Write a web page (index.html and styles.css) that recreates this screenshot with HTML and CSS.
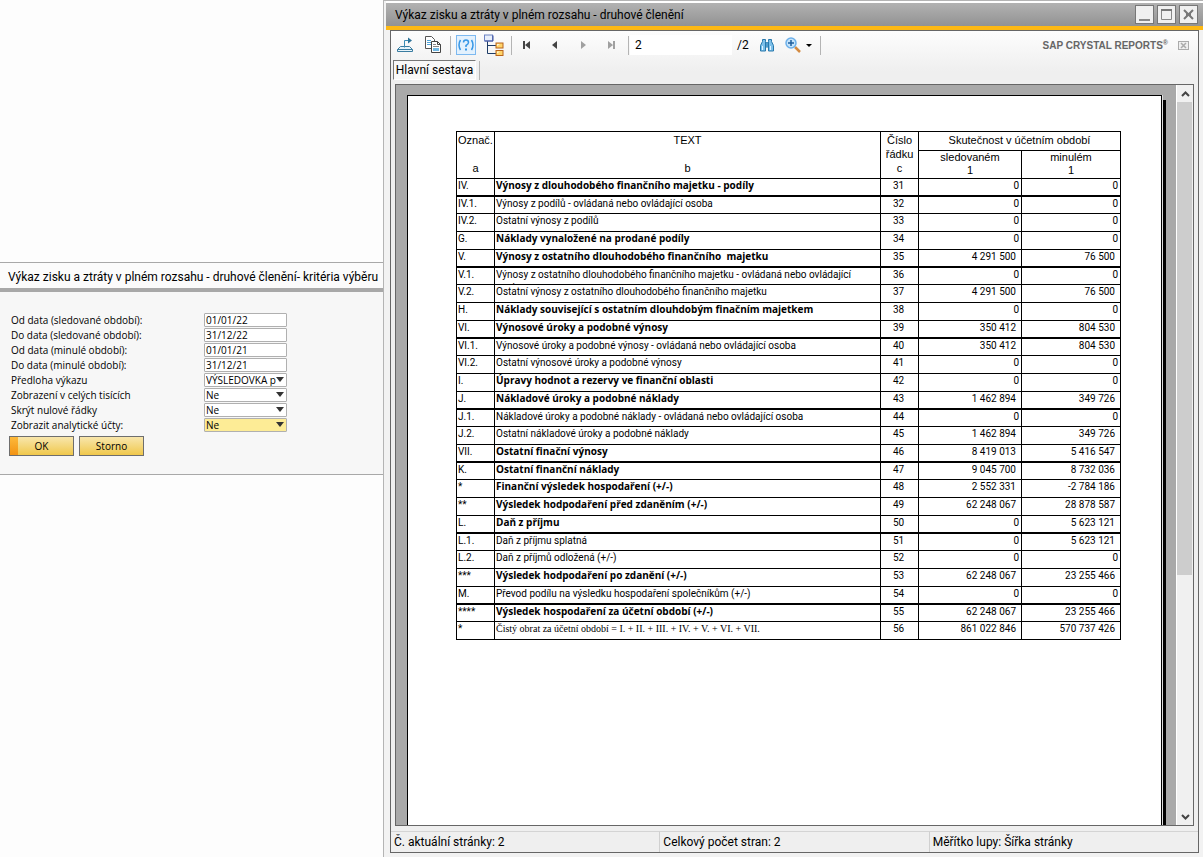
FILE: index.html
```html
<!DOCTYPE html>
<html lang="cs">
<head>
  <meta charset="UTF-8">
  <title>Výkaz zisku a ztráty</title>
  <link rel="stylesheet" href="styles.css">
</head>
<body>
  <!-- Selection criteria -->
  <aside class="side">
    <form class="criteria">
      <h2 class="criteria-title">Výkaz zisku a ztráty v plném rozsahu - druhové členění- kritéria výběru</h2>
      <div class="criteria-body">
        <div class="field"><label for="dateFrom">Od data (sledované období):</label><input type="text" id="dateFrom" value="01/01/22"></div>
        <div class="field"><label for="dateTo">Do data (sledované období):</label><input type="text" id="dateTo" value="31/12/22"></div>
        <div class="field"><label for="prevFrom">Od data (minulé období):</label><input type="text" id="prevFrom" value="01/01/21"></div>
        <div class="field"><label for="prevTo">Do data (minulé období):</label><input type="text" id="prevTo" value="31/12/21"></div>
        <div class="field"><label for="template">Předloha výkazu</label><select id="template"><option>VÝSLEDOVKA p</option></select></div>
        <div class="field"><label for="thousands">Zobrazení v celých tisících</label><select id="thousands"><option>Ne</option></select></div>
        <div class="field"><label for="hideZero">Skrýt nulové řádky</label><select id="hideZero"><option>Ne</option></select></div>
        <div class="field"><label for="analytic">Zobrazit analytické účty:</label><select id="analytic" class="active"><option>Ne</option></select></div>
        <div class="buttons">
          <button type="button" class="btn btn-ok">OK</button>
          <button type="button" class="btn">Storno</button>
        </div>
      </div>
    </form>
  </aside>

  <!-- Report window -->
  <main class="window">
    <header class="titlebar">
      <h1 class="title">Výkaz zisku a ztráty v plném rozsahu - druhové členění</h1>
      <button type="button" class="win-btn" aria-label="Minimalizovat"><svg width="17" height="17" viewBox="0 0 17 17"><path d="M3 14h11" stroke="#888" stroke-width="2"/></svg></button>
      <button type="button" class="win-btn" aria-label="Maximalizovat"><svg width="17" height="17" viewBox="0 0 17 17"><path d="M3.500 4v9.500h10V4" fill="none" stroke="#888"/><path d="M3 4h11" stroke="#777" stroke-width="2"/></svg></button>
      <button type="button" class="win-btn" aria-label="Zavřít"><svg width="17" height="17" viewBox="0 0 17 17"><path d="M4 4l9 9M13 4l-9 9" stroke="#777" stroke-width="2"/><path d="M6 8.500h5" stroke="#777" stroke-width="3"/></svg></button>
    </header>

    <div class="viewer">
      <div class="toolbar">
        <button type="button" class="tool" aria-label="Export">
          <svg width="18" height="18" viewBox="0 0 18 18"><path d="M4.500 10.500h9l3 3v2h-15v-2z" fill="#e8f4fa" stroke="#3a7ca0"/><path d="M1.500 13.500h15" stroke="#3a7ca0"/><path d="M8.500 11.500V4.500h4" fill="none" stroke="#3a8cb5"/><path d="M12 1.500l4 3-4 3z" fill="#2d7399"/></svg>
        </button>
        <button type="button" class="tool" aria-label="Kopírovat">
          <svg width="18" height="18" viewBox="0 0 18 18"><path d="M1.500.5h6l3 3v9h-9z" fill="#fff" stroke="#555"/><path d="M3 4.500h4M3 6.500h6M3 8.500h5" stroke="#4fa3d8"/><path d="M7.500 5.500h6l3 3v8h-9z" fill="#fff" stroke="#444"/><path d="M13.500 5.500v3h3" fill="none" stroke="#444"/><path d="M9 8.500h3M9 10.500h6" stroke="#888"/><path d="M9 12h6v3H9z" fill="#72b9e4"/></svg>
        </button>
        <span class="sep"></span>
        <button type="button" class="tool" aria-label="Parametry">
          <svg width="20" height="20" viewBox="0 0 20 20"><rect x=".5" y=".5" width="19" height="19" fill="#e3f1fd" stroke="#7db9f0"/><path d="M4.500 5q-3 5 0 10M15.500 5q3 5 0 10M7.500 7.500q0-2.500 2.500-2.500t2.500 2.500q0 1.500-2.500 3V12" fill="none" stroke="#3797e6" stroke-width="1.500"/><path d="M9 13.500h2v2H9z" fill="#3797e6"/></svg>
        </button>
        <button type="button" class="tool" aria-label="Strom skupin">
          <svg width="20" height="22" viewBox="0 0 20 22"><path d="M3.500 7v12.500H12M3.500 11.500H12" fill="none" stroke="#1d3c66"/><rect x=".5" y="1" width="8" height="6" fill="#e8effb" stroke="#6d83c4"/><path d="M1 7h8V1.500" fill="none" stroke="#3c4f9c"/><rect x="12" y="9" width="7" height="5" fill="#ffd469" stroke="#b8641c"/><path d="M13 10h3l-3 2z" fill="#fff6d8"/><rect x="12" y="16.500" width="7" height="5" fill="#ffd469" stroke="#b8641c"/><path d="M13 17.500h3l-3 2z" fill="#fff6d8"/></svg>
        </button>
        <span class="sep"></span>
        <button type="button" class="tool" aria-label="První stránka"><svg width="8" height="8" viewBox="0 0 8 8" fill="#444"><path d="M0 0h2v8H0zM7 0v8L2 4z"/></svg></button>
        <button type="button" class="tool" aria-label="Předchozí stránka"><svg width="8" height="8" viewBox="0 0 8 8" fill="#444"><path d="M6 0v8L1 4z"/></svg></button>
        <button type="button" class="tool" aria-label="Další stránka"><svg width="8" height="8" viewBox="0 0 8 8" fill="#a0a0a0"><path d="M2 0v8l5-4z"/></svg></button>
        <button type="button" class="tool" aria-label="Poslední stránka"><svg width="8" height="8" viewBox="0 0 8 8" fill="#a0a0a0"><path d="M6 0h2v8H6zM1 0v8l5-4z"/></svg></button>
        <span class="sep"></span>
        <input type="text" class="page-input" aria-label="Stránka" value="2">
        <span class="page-total">/2</span>
        <button type="button" class="tool" aria-label="Hledat">
          <svg width="16" height="14" viewBox="0 0 16 14"><path d="M3.500 3.500V1.500h3v2l1 1h1l1-1v-2h3v2l2 4v5.500H9.500V9h-3v4h-5V7.500z" fill="#7cbfe9" stroke="#2878ac"/><path d="M6.500 4v5M9.500 4v5M8 5v3" stroke="#2878ac"/><path d="M3.500 8v4M11.500 8v4" stroke="#e2f4ff"/></svg>
        </button>
        <button type="button" class="tool tool-wide" aria-label="Lupa">
          <svg width="28" height="16" viewBox="0 0 28 16"><path d="M10 10l5 5" stroke="#d48b42" stroke-width="2.500"/><circle cx="6" cy="6" r="5" fill="#c6e4fb" stroke="#6cb0ea" stroke-width="1.500"/><path d="M3 6h6M6 3v6" stroke="#1f5f9f" stroke-width="1.500"/><path d="M21 7h6l-3 3z" fill="#000"/></svg>
        </button>
        <span class="sep"></span>
        <span class="brand">SAP CRYSTAL REPORTS<sup>®</sup></span>
        <button type="button" class="brand-close" aria-label="Zavřít zobrazení"><svg width="11" height="9" viewBox="0 0 11 9"><rect x=".5" y=".5" width="10" height="8" fill="#eee" stroke="#aaa"/><path d="M3 2l5 5M8 2L3 7" stroke="#aaa" stroke-width="1.500"/></svg></button>
      </div>

      <div class="tabs">
        <button type="button" class="tab">Hlavní sestava</button>
        <span class="sep"></span>
      </div>

      <div class="canvas">
        <div class="paper">
          <table class="report">
            <colgroup><col class="col-code"><col><col class="col-row"><col class="col-current"><col class="col-previous"></colgroup>
            <thead>
              <tr class="head-top">
                <th rowspan="2">Označ.<br><br>a</th>
                <th rowspan="2">TEXT<br><br>b</th>
                <th rowspan="2">Číslo<br>řádku<br>c</th>
                <th colspan="2">Skutečnost v účetním období</th>
              </tr>
              <tr class="head-sub"><th>sledovaném<br>1</th><th>minulém<br>1</th></tr>
            </thead>
            <tbody>
              <tr class="sum thick"><td>IV.</td><td>Výnosy z dlouhodobého finančního majetku - podíly</td><td>31</td><td>0</td><td>0</td></tr>
              <tr><td>IV.1.</td><td>Výnosy z podílů - ovládaná nebo ovládající osoba</td><td>32</td><td>0</td><td>0</td></tr>
              <tr><td>IV.2.</td><td>Ostatní výnosy z podílů</td><td>33</td><td>0</td><td>0</td></tr>
              <tr class="sum"><td>G.</td><td>Náklady vynaložené na prodané podíly</td><td>34</td><td>0</td><td>0</td></tr>
              <tr class="sum thick"><td>V.</td><td>Výnosy z ostatního dlouhodobého finančního&nbsp; majetku</td><td>35</td><td class="amount">4 291 500</td><td class="amount">76 500</td></tr>
              <tr><td>V.1.</td><td><div class="clip">Výnosy z ostatního dlouhodobého finančního majetku - ovládaná nebo ovládající<br>osoba</div></td><td>36</td><td>0</td><td>0</td></tr>
              <tr><td>V.2.</td><td>Ostatní výnosy z ostatního dlouhodobého finančního majetku</td><td>37</td><td class="amount">4 291 500</td><td class="amount">76 500</td></tr>
              <tr class="sum"><td>H.</td><td>Náklady související s ostatním dlouhdobým finačním majetkem</td><td>38</td><td>0</td><td>0</td></tr>
              <tr class="sum thick"><td>VI.</td><td>Výnosové úroky a podobné výnosy</td><td>39</td><td class="amount">350 412</td><td class="amount">804 530</td></tr>
              <tr><td>VI.1.</td><td>Výnosové úroky a podobné výnosy - ovládaná nebo ovládající osoba</td><td>40</td><td class="amount">350 412</td><td class="amount">804 530</td></tr>
              <tr><td>VI.2.</td><td>Ostatní výnosové úroky a podobné výnosy</td><td>41</td><td>0</td><td>0</td></tr>
              <tr class="sum"><td>I.</td><td>Úpravy hodnot a rezervy ve finanční oblasti</td><td>42</td><td>0</td><td>0</td></tr>
              <tr class="sum thick"><td>J.</td><td>Nákladové úroky a podobné náklady</td><td>43</td><td class="amount">1 462 894</td><td class="amount">349 726</td></tr>
              <tr><td>J.1.</td><td>Nákladové úroky a podobné náklady - ovládaná nebo ovládající osoba</td><td>44</td><td>0</td><td>0</td></tr>
              <tr><td>J.2.</td><td>Ostatní nákladové úroky a podobné náklady</td><td>45</td><td class="amount">1 462 894</td><td class="amount">349 726</td></tr>
              <tr class="sum thick"><td>VII.</td><td>Ostatní finační výnosy</td><td>46</td><td class="amount">8 419 013</td><td class="amount">5 416 547</td></tr>
              <tr class="sum"><td>K.</td><td>Ostatní finanční náklady</td><td>47</td><td class="amount">9 045 700</td><td class="amount">8 732 036</td></tr>
              <tr class="sum"><td>*</td><td>Finanční výsledek hospodaření (+/-)</td><td>48</td><td class="amount">2 552 331</td><td class="amount">-2 784 186</td></tr>
              <tr class="sum"><td>**</td><td>Výsledek hodpodaření před zdaněním (+/-)</td><td>49</td><td class="amount">62 248 067</td><td class="amount">28 878 587</td></tr>
              <tr class="sum thick"><td>L.</td><td>Daň z příjmu</td><td>50</td><td>0</td><td class="amount">5 623 121</td></tr>
              <tr><td>L.1.</td><td>Daň z příjmu splatná</td><td>51</td><td>0</td><td class="amount">5 623 121</td></tr>
              <tr><td>L.2.</td><td>Daň z příjmů odložená (+/-)</td><td>52</td><td>0</td><td>0</td></tr>
              <tr class="sum"><td>***</td><td>Výsledek hodpodaření po zdanění (+/-)</td><td>53</td><td class="amount">62 248 067</td><td class="amount">23 255 466</td></tr>
              <tr class="thick"><td>M.</td><td>Převod podílu na výsledku hospodaření společníkům (+/-)</td><td>54</td><td>0</td><td>0</td></tr>
              <tr class="sum"><td>****</td><td>Výsledek hospodaření za účetní období (+/-)</td><td>55</td><td class="amount">62 248 067</td><td class="amount">23 255 466</td></tr>
              <tr class="turnover"><td>*</td><td>Čistý obrat za účetní období = I. + II. + III. + IV. + V. + VI. + VII.</td><td>56</td><td class="amount">861 022 846</td><td class="amount">570 737 426</td></tr>
            </tbody>
          </table>
        </div>
        <div class="scrollbar">
          <button type="button" class="scroll-btn" aria-label="Nahoru"><svg width="9" height="6" viewBox="0 0 9 6"><path d="M1 5l3.500-3.500L8 5" fill="none" stroke="#444" stroke-width="2"/></svg></button>
          <div class="scroll-track"><div class="scroll-thumb"></div></div>
          <button type="button" class="scroll-btn" aria-label="Dolů"><svg width="9" height="6" viewBox="0 0 9 6"><path d="M1 1l3.500 3.500L8 1" fill="none" stroke="#444" stroke-width="2"/></svg></button>
        </div>
      </div>

      <footer class="status">
        <span>Č. aktuální stránky: 2</span>
        <span>Celkový počet stran: 2</span>
        <span>Měřítko lupy: Šířka stránky</span>
      </footer>
    </div>
  </main>
</body>
</html>
```
FILE: styles.css
```css
* {
  box-sizing: border-box;
}
body {
  margin: 0;
  min-height: 100vh;
  display: grid;
  grid-template-columns: 384px 1fr;
  background: #fdfdfd;
  color: #000;
  font-family: Roboto, "Noto Sans", sans-serif;
  font-size: 12px;
}
h1, h2 {
  margin: 0;
  font-size: 12px;
  font-weight: normal;
}
button {
  padding: 0;
  border: 0;
  background: none;
  color: inherit;
  font: inherit;
}
svg {
  display: block;
}

/* Selection criteria */
.side {
  padding-top: 262px;
  border-right: 1px solid #b4b4b4;
}
.criteria {
  border-top: 1px solid #a8a8a8;
  border-bottom: 1px solid #a8a8a8;
  background: #f7f7f7;
}
.criteria-title {
  padding: 4px 0 0 8px;
  height: 29px;
  border-bottom: 4px solid #a8a8a8;
  background: #fbfbfb;
  line-height: 21px;
  white-space: nowrap;
}
.criteria-body {
  padding: 20px 9px 18px;
  font-family: "Open Sans", "Noto Sans", sans-serif;
  font-size: 10px;
}
.field {
  display: flex;
  height: 15px;
  align-items: center;
}
.field label {
  width: 195px;
  padding-left: 2px;
}
.field input,
.field select {
  width: 83px;
  height: 14px;
  padding: 0 1px;
  border: 1px solid #b0b0b0;
  border-radius: 1px;
  background: #fff;
  color: #000;
  font: inherit;
  line-height: 12px;
}
.field select {
  appearance: none;
  background: #fff url("data:image/svg+xml,%3Csvg xmlns='http://www.w3.org/2000/svg' width='8' height='5'%3E%3Cpath d='M0 0h8L4 5z' fill='%23333'/%3E%3C/svg%3E") no-repeat right 2px top 3px;
  padding-right: 10px;
}
.field select.active {
  background-color: #fdec96;
}
.buttons {
  display: flex;
  gap: 5px;
  padding-top: 4px;
}
.btn {
  width: 65px;
  height: 20px;
  border: 1px solid #6e6e6e;
  background: linear-gradient(#f8e6ac, #f0c84c);
}
.btn-ok {
  background: linear-gradient(#fdb93a, #f39313) left / 8px 100% no-repeat, linear-gradient(#f8e6ac, #f0c84c);
}

/* Report window */
.window {
  display: flex;
  flex-direction: column;
  min-width: 0;
  padding-left: 2px;
  border-top: 1px solid #b4b4b4;
  background: #f2f2f2;
}
.titlebar {
  display: flex;
  align-items: center;
  gap: 3px;
  height: 29px;
  padding: 0 5px 0 9px;
  border-top: 2px solid #fff;
  border-bottom: 4px solid #fdb813;
  background: linear-gradient(#b2b2b2, #929292);
}
.title {
  flex: 1;
}
.win-btn {
  width: 19px;
  height: 19px;
  border: 1px solid #777;
  background: #f0f0f0;
}
.viewer {
  flex: 1;
  display: flex;
  flex-direction: column;
  margin: 0 4px 4px;
  border: 1px solid #666;
  background: linear-gradient(#fdfdfd, #efefef 40px);
}
.toolbar {
  display: flex;
  align-items: center;
  height: 28px;
}
.tool {
  display: flex;
  align-items: center;
  justify-content: center;
  width: 28px;
  height: 24px;
}
.tool-wide {
  width: 36px;
}
.sep {
  width: 1px;
  height: 19px;
  margin: 0 1px 0 3px;
  background: #b4b4b4;
}
.page-input {
  width: 102px;
  height: 20px;
  padding: 0 5px;
  border: 0;
  background: #fff;
  color: #000;
  font: inherit;
}
.page-total {
  padding: 0 4px 0 5px;
}
.brand {
  margin-left: auto;
  color: #666;
  font: bold 10px "Liberation Sans", Arial, sans-serif;
}
.brand sup {
  font-size: 7px;
  line-height: 1px;
}
.brand-close {
  margin: 0 9px 0 10px;
}
.tabs {
  display: flex;
  align-items: center;
  height: 25px;
  padding: 0 0 3px 2px;
}
.tab {
  width: 83px;
  height: 20px;
  border: 1px solid #fff;
  border-top-color: #777;
  border-left-color: #777;
  background: #f8f8f8;
}

/* Page preview */
.canvas {
  flex: 1;
  display: flex;
  margin: 0 4px;
  border: 1px solid #666;
  background: #a9a9a9;
}
.paper {
  flex: 1;
  min-width: 0;
  margin: 10px 14px 0 11px;
  padding: 35px 40px 0 48px;
  border: 1px solid #000;
  border-bottom: 0;
  background: #fff;
  box-shadow: 1px 0 0 #ddd, 4px 5px 0 #000;
  clip-path: inset(0 -4px 0 0);
}
.report {
  width: 100%;
  table-layout: fixed;
  border-collapse: separate;
  border-spacing: 0;
  border-top: 1px solid #000;
  border-left: 1px solid #000;
  font-size: 10px;
  line-height: 13px;
}
.col-code,
.col-row {
  width: 38px;
}
.col-current {
  width: 103px;
}
.col-previous {
  width: 99px;
}
.report th,
.report td {
  padding: 0;
  border-right: 1px solid #000;
  border-bottom: 1px solid #000;
  vertical-align: top;
  white-space: nowrap;
}
.report th {
  font: 11px/14px "Liberation Sans", Arial, sans-serif;
}
.head-top th {
  height: 19px;
  padding-top: 1px;
}
.head-sub th {
  height: 28px;
  line-height: 13px;
}
.report td {
  height: 18px;
  text-align: right;
  padding-right: 2px;
}
.report .thick td {
  border-bottom-width: 2px;
}
.report .thick + tr td {
  height: 17px;
}
.report td:nth-child(-n+2) {
  text-align: left;
  padding: 0 0 0 1px;
}
.report td:nth-child(3) {
  text-align: center;
}
.report .amount {
  padding-right: 5px;
}
.sum td:nth-child(2) {
  font-family: "Open Sans", "Noto Sans", sans-serif;
  font-weight: bold;
}
.turnover td:nth-child(2) {
  font-family: "Liberation Serif", "Times New Roman", serif;
}
.clip {
  height: 16px;
  overflow: hidden;
}

/* Scrollbar */
.scrollbar {
  display: flex;
  flex-direction: column;
  width: 17px;
  background: #f0f0f0;
  border-left: 1px solid #fff;
}
.scroll-btn {
  display: flex;
  align-items: center;
  justify-content: center;
  height: 17px;
}
.scroll-track {
  flex: 1;
}
.scroll-thumb {
  width: 15px;
  height: 67%;
  background: #cdcdcd;
}

/* Status bar */
.status {
  display: flex;
  height: 26px;
  padding-top: 5px;
}
.status span {
  flex: 1;
  padding-left: 3px;
  border-top: 1px solid #d4d4d4;
  line-height: 20px;
}
.status span + span {
  border-left: 1px solid #d0d0d0;
}
```
